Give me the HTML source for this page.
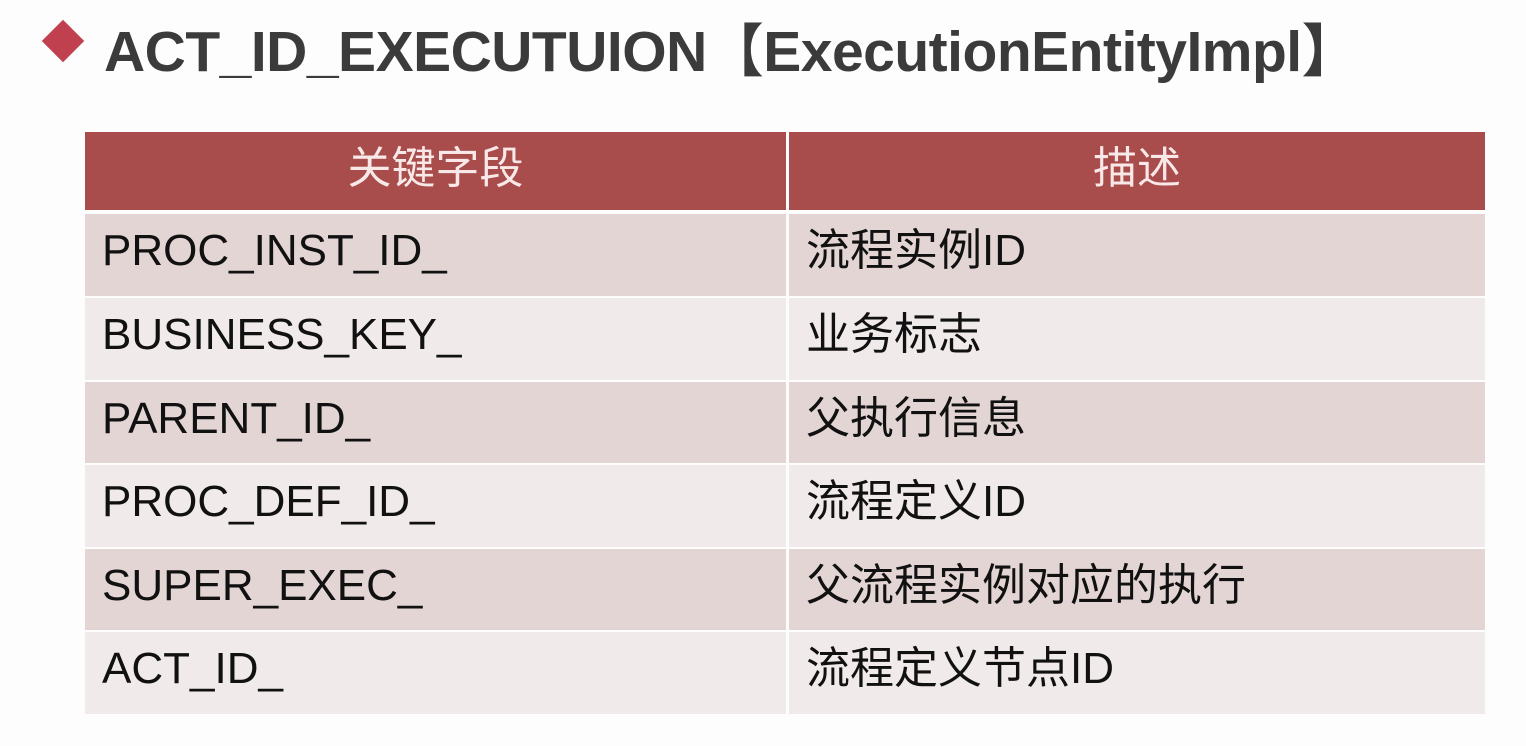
<!DOCTYPE html>
<html><head><meta charset="utf-8"><style>
body{margin:0;width:1526px;height:746px;background:#fdfdfd;overflow:hidden;position:relative;font-family:"Liberation Sans","Noto Sans CJK SC",sans-serif;}
.dia{position:absolute;left:48px;top:26px;width:30px;height:30px;background:#c0404f;transform:rotate(45deg);}
.title{position:absolute;left:104px;top:6px;font-size:57px;font-weight:bold;color:#3b3b3b;white-space:nowrap;letter-spacing:-0.5px;}
.cell{position:absolute;box-sizing:border-box;font-size:44px;color:#111;line-height:1;display:flex;align-items:center;padding-left:17px;padding-bottom:8px;}
.h{background:#a84c4c;color:#f8e8e8;justify-content:center;padding-left:0;padding-bottom:4px;}
.o{background:#e4d5d5;}
.e{background:#f1eaea;}
</style></head><body>
<div class="dia"></div>
<div class="title">ACT_ID_EXECUTUION【ExecutionEntityImpl】</div>
<div class="cell h" style="left:85px;top:132px;width:701px;height:78px">关键字段</div>
<div class="cell h" style="left:789px;top:132px;width:696px;height:78px">描述</div>

<div class="cell o" style="left:85px;top:214px;width:701px;height:82px">PROC_INST_ID_</div>
<div class="cell o" style="left:789px;top:214px;width:696px;height:82px">流程实例ID</div>
<div class="cell e" style="left:85px;top:298px;width:701px;height:82px">BUSINESS_KEY_</div>
<div class="cell e" style="left:789px;top:298px;width:696px;height:82px">业务标志</div>
<div class="cell o" style="left:85px;top:382px;width:701px;height:81px">PARENT_ID_</div>
<div class="cell o" style="left:789px;top:382px;width:696px;height:81px">父执行信息</div>
<div class="cell e" style="left:85px;top:465px;width:701px;height:82px">PROC_DEF_ID_</div>
<div class="cell e" style="left:789px;top:465px;width:696px;height:82px">流程定义ID</div>
<div class="cell o" style="left:85px;top:549px;width:701px;height:81px">SUPER_EXEC_</div>
<div class="cell o" style="left:789px;top:549px;width:696px;height:81px">父流程实例对应的执行</div>
<div class="cell e" style="left:85px;top:632px;width:701px;height:82px">ACT_ID_</div>
<div class="cell e" style="left:789px;top:632px;width:696px;height:82px">流程定义节点ID</div>
</body></html>
